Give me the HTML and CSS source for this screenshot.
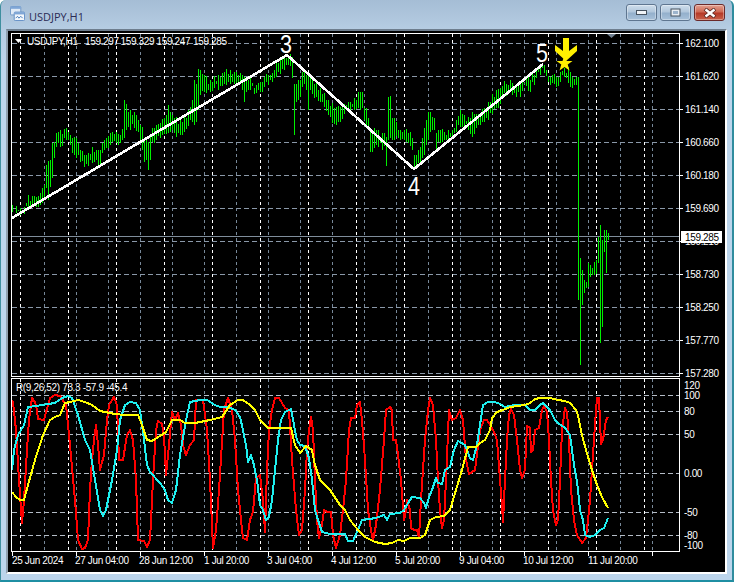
FILE: index.html
```html
<!DOCTYPE html>
<html lang="en">
<head>
<meta charset="utf-8">
<title>USDJPY,H1</title>
<link rel="stylesheet" href="styles.css">
</head>
<body>
<div class="window">
  <header class="titlebar">
    <svg class="appicon" viewBox="0 0 16 16" width="15" height="15">
      <rect x="0.5" y="0.5" width="11" height="9" rx="1" fill="#dfeaf6" stroke="#6f97c6"/>
      <rect x="0.5" y="0.5" width="11" height="2.5" fill="#7fa6d6"/>
      <rect x="4.5" y="6.5" width="11" height="9" rx="1" fill="#f4f8fc" stroke="#5f8dc4"/>
      <rect x="4.5" y="6.5" width="11" height="2.5" fill="#7fa6d6"/>
      <path d="M6 13l2-2 1.500 2 2-2 2 2" fill="none" stroke="#3f76b8"/>
    </svg>
    <span class="title">USDJPY,H1</span>
    <div class="buttons">
      <div class="winbtn">
        <svg viewBox="0 0 11 5" width="11" height="5"><rect x="0.5" y="0.5" width="10" height="4" fill="#f1f4f7" stroke="#46525f"/></svg>
      </div>
      <div class="winbtn">
        <svg viewBox="0 0 11 9" width="11" height="9"><rect x="1" y="1" width="9" height="7" fill="#e9eef3" stroke="#46525f" stroke-width="1"/><rect x="3" y="3" width="5" height="3" fill="#9db4cc"/></svg>
      </div>
      <div class="winbtn winbtn-close">
        <svg viewBox="0 0 14 10" width="14" height="10"><path d="M2 1l10 8M12 1L2 9" stroke="#5a2a24" stroke-width="4"/><path d="M2.500 1.500l9 7M11.500 1.500l-9 7" stroke="#fff" stroke-width="2.400"/></svg>
      </div>
    </div>
  </header>
  <main class="client">
    <svg class="chart" viewBox="8 31 717 541" width="717" height="541">
      <path class="grid-v" d="M44 34V376M76 34V376M108 34V376M140 34V376M172 34V376M204 34V376M236 34V376M268 34V376M300 34V376M332 34V376M364 34V376M396 34V376M428 34V376M460 34V376M492 34V376M524 34V376M556 34V376M588 34V376M620 34V376M652 34V376M44 379V551M76 379V551M108 379V551M140 379V551M172 379V551M204 379V551M236 379V551M268 379V551M300 379V551M332 379V551M364 379V551M396 379V551M428 379V551M460 379V551M492 379V551M524 379V551M556 379V551M588 379V551M620 379V551M652 379V551"/>
      <path class="grid-h" d="M12 43.500H679M12 76.500H679M12 109.500H679M12 142.500H679M12 175.500H679M12 208.500H679M12 241.500H679M12 274.500H679M12 307.500H679M12 340.500H679M12 373.500H679"/>
      <path class="grid-h level" d="M12 395.500H679M12 411.500H679M12 434.500H679M12 473.500H679M12 512.500H679M12 535.500H679"/>
      <path class="grid-sep" d="M20.500 34V376M68.500 34V376M116.500 34V376M164.500 34V376M212.500 34V376M260.500 34V376M308.500 34V376M356.500 34V376M404.500 34V376M452.500 34V376M500.500 34V376M548.500 34V376M596.500 34V376M644.500 34V376M20.500 379V551M68.500 379V551M116.500 379V551M164.500 379V551M212.500 379V551M260.500 379V551M308.500 379V551M356.500 379V551M404.500 379V551M452.500 379V551M500.500 379V551M548.500 379V551M596.500 379V551M644.500 379V551"/>

      <path class="price-line" d="M12 236.500H680"/>
      <path id="bars" class="bars"/>
      <polyline class="zigzag" points="12,218 287,55 414,169 543,64"/>

      <polyline id="line-red" class="line line-red"/>
      <polyline id="line-cyan" class="line line-cyan"/>
      <polyline id="line-yellow" class="line line-yellow"/>

      <rect class="frame" x="11.500" y="33.500" width="668" height="343"/>
      <rect class="frame" x="11.500" y="378.500" width="668" height="173"/>
      <path class="frame" d="M680 43.500h3M680 76.500h3M680 109.500h3M680 142.500h3M680 175.500h3M680 208.500h3M680 241.500h3M680 274.500h3M680 307.500h3M680 340.500h3M680 373.500h3M12.500 552v4M76.500 552v4M140.500 552v4M204.500 552v4M268.500 552v4M332.500 552v4M396.500 552v4M460.500 552v4M524.500 552v4M588.500 552v4M652.500 552v4"/>

      <path class="marker-top" d="M607 34h9l-4.500 4z"/>
      <path class="marker-small" d="M15 39h7l-3.500 4z"/>
      <path class="arrow" d="M563 38h6v13l8-6v6l-11 10-11-10v-6l8 6z"/>
      <path class="arrow" d="M564.500 55.500l2 5.500 6 0-4.800 3.600 1.800 5.800-5-3.500-5 3.500 1.800-5.800-4.800-3.600 6 0z"/>

      <text class="wave" x="280" y="53" textLength="12" lengthAdjust="spacingAndGlyphs">3</text>
      <text class="wave" x="408" y="195" textLength="12" lengthAdjust="spacingAndGlyphs">4</text>
      <text class="wave" x="536" y="62" textLength="12" lengthAdjust="spacingAndGlyphs">5</text>

      <text class="label" y="45"><tspan x="27">USDJPY,H1</tspan><tspan x="85">159.297</tspan><tspan x="120.500">159.329</tspan><tspan x="156.500">159.247</tspan><tspan x="193">159.285</tspan></text>
      <text class="label" x="16" y="391">R(9,26,52) 73.3 -57.9 -45.4</text>

      <text class="label" x="685" y="47">162.100</text>
      <text class="label" x="685" y="80">161.620</text>
      <text class="label" x="685" y="113">161.140</text>
      <text class="label" x="685" y="146">160.660</text>
      <text class="label" x="685" y="179">160.180</text>
      <text class="label" x="685" y="212">159.690</text>
      <text class="label" x="685" y="245">159.210</text>
      <text class="label" x="685" y="278">158.730</text>
      <text class="label" x="685" y="311">158.250</text>
      <text class="label" x="685" y="344">157.770</text>
      <text class="label" x="685" y="377">157.280</text>
      <rect class="price-tag" x="681" y="231" width="41" height="12"/>
      <text class="label label-dark" x="685" y="241">159.285</text>

      <text class="label" x="684" y="389">120</text>
      <text class="label" x="684" y="399">100</text>
      <text class="label" x="684" y="415">80</text>
      <text class="label" x="684" y="438">50</text>
      <text class="label" x="684" y="477">0.00</text>
      <text class="label" x="684" y="516">-50</text>
      <text class="label" x="684" y="539">-80</text>
      <text class="label" x="684" y="549">-100</text>

      <text class="label" x="12" y="564">25 Jun 2024</text>
      <text class="label" x="75" y="564">27 Jun 04:00</text>
      <text class="label" x="139" y="564">28 Jun 12:00</text>
      <text class="label" x="204" y="564">1 Jul 20:00</text>
      <text class="label" x="267" y="564">3 Jul 04:00</text>
      <text class="label" x="331" y="564">4 Jul 12:00</text>
      <text class="label" x="395" y="564">5 Jul 20:00</text>
      <text class="label" x="459" y="564">9 Jul 04:00</text>
      <text class="label" x="523" y="564">10 Jul 12:00</text>
      <text class="label" x="588" y="564">11 Jul 20:00</text>
    </svg>
  </main>
</div>
<script src="chart.js"></script>
</body>
</html>
```
FILE: styles.css
```css
html, body {
  margin: 0;
  padding: 0;
  background: #fff;
}
.window {
  box-sizing: border-box;
  width: 734px;
  height: 582px;
  display: flex;
  flex-direction: column;
  padding: 0 5px 6px;
  border-left: 1px solid #3f8f9f;
  border-right: 2px solid #2f8c9e;
  border-bottom: 2px solid #1f8fa3;
  border-top-left-radius: 6px;
  border-top-right-radius: 6px;
  background: linear-gradient(#a5bdd5, #b6cde3 30px, #bcd5ec 60px);
  font-family: "Liberation Sans", Arial, sans-serif;
}
.titlebar {
  height: 29px;
  flex: none;
  display: flex;
  align-items: center;
  gap: 4px;
  padding-left: 4px;
}
.appicon {
  flex: none;
  margin-top: -2px;
}
.title {
  font-family: "Open Sans", sans-serif;
  font-size: 11px;
  color: #2b2b55;
  margin-top: 4px;
}
.buttons {
  margin-left: auto;
  margin-right: 2px;
  margin-top: -4px;
  display: flex;
  gap: 3px;
}
.winbtn {
  box-sizing: border-box;
  width: 31px;
  height: 17px;
  border: 1px solid #5f7690;
  border-radius: 3px;
  box-shadow: inset 0 0 0 1px rgba(255,255,255,.35);
  background: linear-gradient(#cfdeec, #b2c7dc 45%, #94b0cc 55%, #a9c2da);
  display: flex;
  align-items: center;
  justify-content: center;
}
.winbtn-close {
  border-color: #6b2a2a;
  background: linear-gradient(#e3a090, #cf6a55 45%, #b53a28 55%, #c9614a);
}
.client {
  flex: 1;
  min-height: 0;
  display: flex;
  border-top: 2px solid #6e7e8e;
  border-left: 2px solid #8f9fae;
  border-right: 2px solid #fff;
  border-bottom: 2px solid #fff;
  background: #000;
}
.chart {
  display: block;
  background: #000;
}
.grid-v, .grid-h, .grid-sep, .frame, .price-line, .bars, .zigzag, .line {
  fill: none;
}
.grid-v {
  stroke: #778899;
  stroke-dasharray: 3 3;
  transform: translateX(.5px);
}
.grid-h {
  stroke: #8a98a8;
  stroke-dasharray: 5 3;
}
.level {
  stroke: #b4bcc6;
}
.grid-sep {
  stroke: #fff;
  stroke-dasharray: 3 3;
}
.frame {
  stroke: #fff;
}
.price-line {
  stroke: #7f8d9b;
}
.bars {
  stroke: #00f000;
  shape-rendering: crispEdges;
}
.zigzag {
  stroke: #fff;
  stroke-width: 2.6;
  shape-rendering: crispEdges;
}
.line {
  stroke-width: 2;
  stroke-linejoin: round;
  shape-rendering: crispEdges;
}
.line-red {
  stroke: #f00;
}
.line-cyan {
  stroke: #1ef0f0;
}
.line-yellow {
  stroke: #ff0;
}
.marker-top {
  fill: #708090;
}
.marker-small {
  fill: #fff;
}
.arrow {
  fill: #fff000;
}
.wave {
  fill: #fff;
  font-family: "Liberation Sans", Arial, sans-serif;
  font-size: 26px;
}
.label {
  fill: #fff;
  font-family: "Liberation Sans", Arial, sans-serif;
  font-size: 10px;
  letter-spacing: -.35px;
}
.label-dark {
  fill: #000;
}
.price-tag {
  fill: #fff;
}
```
FILE: chart.js
```js
// x, high (top y), low (bottom y) of the hourly bars; in-between bars are interpolated.
var BARS = [
[12,205,212],[16,206,213],[20,208,215],[24,207,214],[28,195,210],[32,196,207],[36,197,207],[40,193,205],
[42,188,203],[44,185,198],[46,165,188],[48,161,200],[50,160,187],[52,143,178],[54,142,158],[56,133,147],
[60,130,147],[62,134,146],[66,128,140],[70,135,145],[72,138,153],[76,138,158],[80,150,162],[84,155,167],
[88,153,166],[92,147,163],[96,150,160],[98,150,165],[100,150,165],[104,140,150],[108,136,148],[112,132,142],
[116,132,143],[120,135,143],[122,129,140],[124,100,138],[126,104,130],[130,110,130],[134,112,128],[138,120,132],
[140,125,140],[142,127,150],[144,140,162],[146,140,160],[148,142,170],[150,136,160],[152,128,142],[156,125,140],
[160,123,138],[164,118,134],[168,105,133],[170,112,132],[172,115,130],[176,117,137],[180,120,135],[184,117,132],
[188,110,126],[192,100,122],[194,80,125],[196,84,122],[198,69,110],[200,70,95],[204,75,92],[210,80,92],
[214,76,88],[218,75,90],[222,73,86],[226,69,85],[230,70,84],[236,72,85],[240,73,83],[242,75,90],[244,77,102],
[246,78,92],[250,78,90],[256,85,93],[260,82,92],[264,77,87],[268,75,85],[272,73,82],[276,63,77],[280,60,74],
[284,57,70],[288,55,65],[290,54,66],[292,57,78],[294,84,135],[296,84,102],[298,80,100],[300,80,97],[302,72,87],
[304,72,84],[306,75,90],[308,73,110],[310,78,90],[312,80,94],[316,82,97],[320,88,102],[324,93,107],[328,100,115],
[332,103,123],[334,108,124],[338,106,122],[340,107,122],[344,104,114],[350,102,110],[354,98,110],[358,92,108],
[360,92,110],[362,92,108],[364,108,120],[366,108,127],[368,118,130],[370,128,152],[372,130,152],[374,128,148],
[378,130,147],[382,133,150],[384,133,146],[386,137,166],[388,97,140],[390,96,138],[392,118,140],[394,118,140],
[396,122,136],[400,130,140],[404,130,140],[408,133,143],[410,132,146],[412,138,150],[414,155,170],[416,155,165],
[418,150,163],[420,147,163],[422,138,158],[424,128,155],[426,120,145],[428,112,140],[430,112,132],[432,117,130],
[434,118,130],[436,133,150],[438,130,142],[444,132,140],[448,130,140],[452,130,137],[456,120,132],[460,110,127],
[464,115,128],[468,117,130],[472,112,137],[476,114,128],[480,115,125],[484,108,122],[488,102,120],[492,94,114],
[496,90,108],[500,88,104],[505,80,95],[510,80,92],[516,85,97],[520,82,97],[525,78,85],[530,80,92],[535,70,80],
[540,67,75],[544,65,73],[546,70,76],[548,76,82],[552,75,83],[556,77,87],[560,72,82],[564,68,77],[568,67,83],
[570,72,87],[572,77,88],[576,77,85],[578,77,300],[580,258,365],[582,270,305],[584,280,293],[586,282,288],
[588,263,287],[590,265,277],[592,268,275],[594,262,275],[596,260,274],[598,237,263],[600,225,343],[602,240,327],
[604,230,252],[606,230,273],[608,233,240]
];
var RED = [
[12,400],[13,402],[16,430],[19,480],[22,523],[24,500],[27,450],[29,420],[32,398],[35,402],[37,410],[38,419],[44,420],
[48,405],[50,398],[55,395],[60,396],[66,405],[70,445],[75,500],[78,540],[82,549],[85,548],[88,540],[90,490],[92,460],
[94,440],[96,425],[98,445],[100,470],[104,455],[107,420],[109,405],[114,397],[117,405],[119,460],[123,460],[127,435],
[130,430],[133,440],[136,480],[138,540],[144,541],[147,547],[150,540],[153,480],[156,430],[158,421],[162,424],[164,436],
[166,475],[169,445],[172,412],[175,420],[178,413],[181,425],[183,445],[186,455],[190,445],[194,440],[196,400],[198,400],
[203,400],[207,430],[210,480],[213,548],[216,530],[219,490],[224,410],[228,398],[232,410],[235,440],[238,490],[241,520],
[243,538],[247,540],[250,520],[253,512],[256,478],[260,475],[263,500],[265,532],[267,470],[269,430],[272,410],[275,398],
[279,398],[282,403],[285,408],[289,410],[292,460],[296,510],[299,535],[302,530],[305,490],[307,450],[309,430],[311,417],
[313,430],[315,480],[317,520],[319,538],[322,525],[324,510],[327,512],[331,512],[333,535],[336,548],[340,535],[343,510],
[346,480],[349,430],[351,418],[355,418],[357,405],[360,402],[362,420],[365,460],[368,510],[371,530],[373,540],[376,525],
[380,490],[384,440],[386,410],[390,407],[392,410],[393,440],[396,440],[398,455],[401,480],[404,520],[406,510],[407,500],
[410,510],[411,528],[414,530],[417,530],[419,538],[421,500],[423,470],[425,440],[428,410],[430,398],[433,405],[436,440],
[438,480],[440,510],[442,528],[444,520],[446,480],[449,410],[452,420],[456,418],[460,410],[463,420],[466,460],[469,474],
[475,470],[480,430],[484,420],[487,420],[490,425],[494,432],[497,440],[500,480],[502,505],[503,522],[505,480],[507,440],
[509,415],[511,409],[514,415],[517,440],[520,470],[522,478],[525,470],[527,426],[530,428],[531,452],[533,450],[535,430],
[539,428],[542,410],[544,406],[547,412],[549,440],[551,480],[553,510],[556,525],[558,520],[560,480],[562,430],[565,408],
[567,412],[569,440],[571,490],[574,520],[577,535],[582,543],[586,538],[588,520],[590,500],[592,470],[594,440],[596,410],
[597,398],[599,398],[601,444],[603,440],[606,420],[608,417]
];
var CYAN = [
[12,470],[14,450],[18,435],[24,425],[28,407],[36,406],[48,404],[55,403],[62,398],[68,396],[72,398],[78,415],[85,440],
[90,450],[95,480],[100,510],[103,516],[106,510],[112,480],[117,450],[120,420],[125,405],[130,402],[136,403],[140,410],
[144,440],[147,465],[150,472],[160,483],[165,490],[168,500],[172,503],[176,490],[180,455],[186,420],[190,402],[200,400],
[207,400],[215,405],[220,407],[228,407],[235,410],[240,417],[243,430],[246,445],[248,462],[251,455],[254,465],[257,480],
[260,505],[263,510],[266,520],[269,517],[272,500],[275,470],[278,440],[281,420],[285,412],[291,409],[294,425],[297,440],
[300,445],[305,446],[309,458],[312,480],[315,510],[318,520],[322,532],[330,534],[345,534],[348,541],[353,541],[358,530],
[362,520],[376,518],[384,515],[387,520],[390,514],[400,513],[404,510],[408,503],[412,497],[420,498],[424,503],[426,508],
[429,497],[432,490],[436,478],[438,483],[442,484],[445,470],[450,467],[454,450],[458,441],[465,445],[470,458],[473,460],
[477,445],[480,425],[483,405],[488,402],[495,402],[500,404],[505,407],[515,405],[525,405],[530,410],[535,410],[540,405],
[543,403],[550,410],[555,420],[558,423],[565,428],[570,435],[572,450],[574,465],[576,475],[578,490],[580,510],[583,520],
[585,535],[590,537],[595,535],[600,530],[604,528],[608,518]
];
var YELLOW = [
[12,492],[16,497],[20,500],[24,500],[28,485],[35,460],[43,435],[50,420],[55,417],[60,415],[65,403],[70,402],[78,400],
[85,402],[92,405],[100,411],[105,412],[115,414],[125,415],[138,415],[142,425],[147,440],[152,441],[160,436],[166,432],
[172,420],[180,420],[185,423],[195,423],[210,420],[222,417],[230,405],[238,400],[243,400],[250,405],[255,410],[260,420],
[268,428],[291,428],[295,445],[300,453],[306,446],[312,450],[315,465],[320,480],[330,490],[340,505],[345,510],[350,520],
[358,530],[365,537],[375,542],[385,544],[392,543],[398,540],[404,541],[410,538],[420,538],[425,535],[430,520],[436,517],
[444,516],[450,510],[456,490],[462,470],[468,447],[476,447],[480,443],[485,440],[490,430],[492,418],[497,412],[503,410],
[510,407],[525,405],[530,403],[535,399],[540,398],[550,398],[558,400],[565,401],[570,403],[576,410],[578,415],[582,435],
[586,450],[592,470],[597,485],[602,497],[608,508]
];

function noise(x) {
  var v = Math.sin(x * 12.9898) * 43758.5453;
  return v - Math.floor(v);
}

function barsPath(keys) {
  var d = "";
  var k = 0;
  for (var x = 12; x <= 608; x += 2) {
    while (k < keys.length - 2 && keys[k + 1][0] <= x) k++;
    var a = keys[k], b = keys[k + 1];
    var t = (x - a[0]) / (b[0] - a[0]);
    var exact = t === 0 || t === 1;
    var top = a[1] + (b[1] - a[1]) * t;
    var bot = a[2] + (b[2] - a[2]) * t;
    if (!exact) {
      top += (noise(x) - 0.3) * 8;
      bot += (noise(x + 1) - 0.7) * 8;
    }
    d += "M" + (x + 0.5) + " " + Math.round(top) + "V" + Math.round(bot);
  }
  return d;
}

function pointsOf(list) {
  return list.map(function (p) { return p[0] + "," + p[1]; }).join(" ");
}

document.getElementById("bars").setAttribute("d", barsPath(BARS));
document.getElementById("line-red").setAttribute("points", pointsOf(RED));
document.getElementById("line-cyan").setAttribute("points", pointsOf(CYAN));
document.getElementById("line-yellow").setAttribute("points", pointsOf(YELLOW));
```
